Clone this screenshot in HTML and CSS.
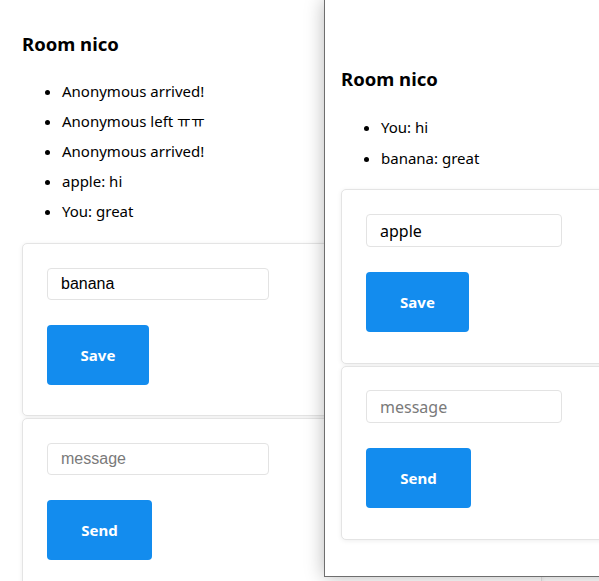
FILE: index.html
```html
<!DOCTYPE html>
<html>
<head>
<meta charset="utf-8">
<link rel="stylesheet" href="styles.css">
</head>
<body>
<div class="desk">
  <div class="win win1">
    <h3 class="title">Room nico</h3>
    <ul class="msgs">
      <li>Anonymous arrived!</li>
      <li>Anonymous left ㅠㅠ</li>
      <li>Anonymous arrived!</li>
      <li>apple: hi</li>
      <li>You: great</li>
    </ul>
    <form class="card">
      <input class="field" type="text" value="banana">
      <button class="btn" type="button">Save</button>
    </form>
    <form class="card card-next">
      <input class="field" type="text" placeholder="message">
      <button class="btn btn-send" type="button">Send</button>
    </form>
  </div>
  <div class="win win2">
    <h3 class="title">Room nico</h3>
    <ul class="msgs msgs2">
      <li>You: hi</li>
      <li>banana: great</li>
    </ul>
    <form class="card card2">
      <input class="field field2" type="text" value="apple">
      <button class="btn btn2" type="button">Save</button>
    </form>
    <form class="card card2 card-next">
      <input class="field field2" type="text" placeholder="message">
      <button class="btn btn-send btn2" type="button">Send</button>
    </form>
  </div>
</div>
</body>
</html>
```
FILE: styles.css
```css
* { box-sizing: border-box; }
html, body { margin: 0; padding: 0; background: #fff; overflow: hidden; }
body { font-family: "Noto Sans", "Noto Sans CJK KR", sans-serif; color: #000; }
.desk { position: relative; width: 599px; height: 581px; overflow: hidden; }
.win { position: absolute; top: 0; background: #fff; }
.win1 { left: 0; width: 700px; padding: 31px 0 0 22px; }
.win2 {
  left: 324px; width: 420px; height: 577px;
  padding: 66px 0 0 16px;
  border-left: 1px solid #6e6e6e; border-bottom: 1px solid #6e6e6e;
  box-shadow: 0 0 18px rgba(0,0,0,0.28);
}
.title { margin: 0; font-size: 18.5px; line-height: 26px; font-weight: 700; }
.msgs { margin: 23px 0 21px; padding-left: 40px; font-size: 15px; }
.msgs li { line-height: 22px; margin-bottom: 8px; }
.msgs2 { margin-top: 24px; margin-bottom: 20px; }
.msgs2 li { margin-bottom: 9px; }
.card {
  display: flex; flex-direction: column; align-items: flex-start;
  width: 520px; margin: 0;
  padding: 24px 24px 30px;
  border: 1px solid #e4e4e4; border-radius: 5px;
  box-shadow: 0 1px 5px rgba(0,0,0,0.07);
  background: #fff;
}
.card2 { padding-bottom: 31px; }
.card-next { margin-top: 2px; }
.card2.card-next { padding-top: 23px; }
.field {
  width: 222px; height: 32px; margin: 0 0 25px;
  padding: 0 13px;
  border: 1px solid #e3e3e3; border-radius: 4px;
  font-family: "Liberation Sans", Arial, sans-serif; font-size: 16px; color: #000;
  outline: none;
}
.field::placeholder { color: #7a7a7a; }
.field2 { width: 196px; height: 33px; font-family: "Noto Sans", sans-serif; }
.btn {
  width: 102px; height: 60px; padding: 0;
  border: none; border-radius: 4px;
  background: #138cee; color: #fff;
  font-family: "Noto Sans", sans-serif; font-size: 15px; font-weight: 700;
}
.btn-send { width: 105px; }
.btn2 { width: 103px; }
.btn2.btn-send { width: 105px; }
```
